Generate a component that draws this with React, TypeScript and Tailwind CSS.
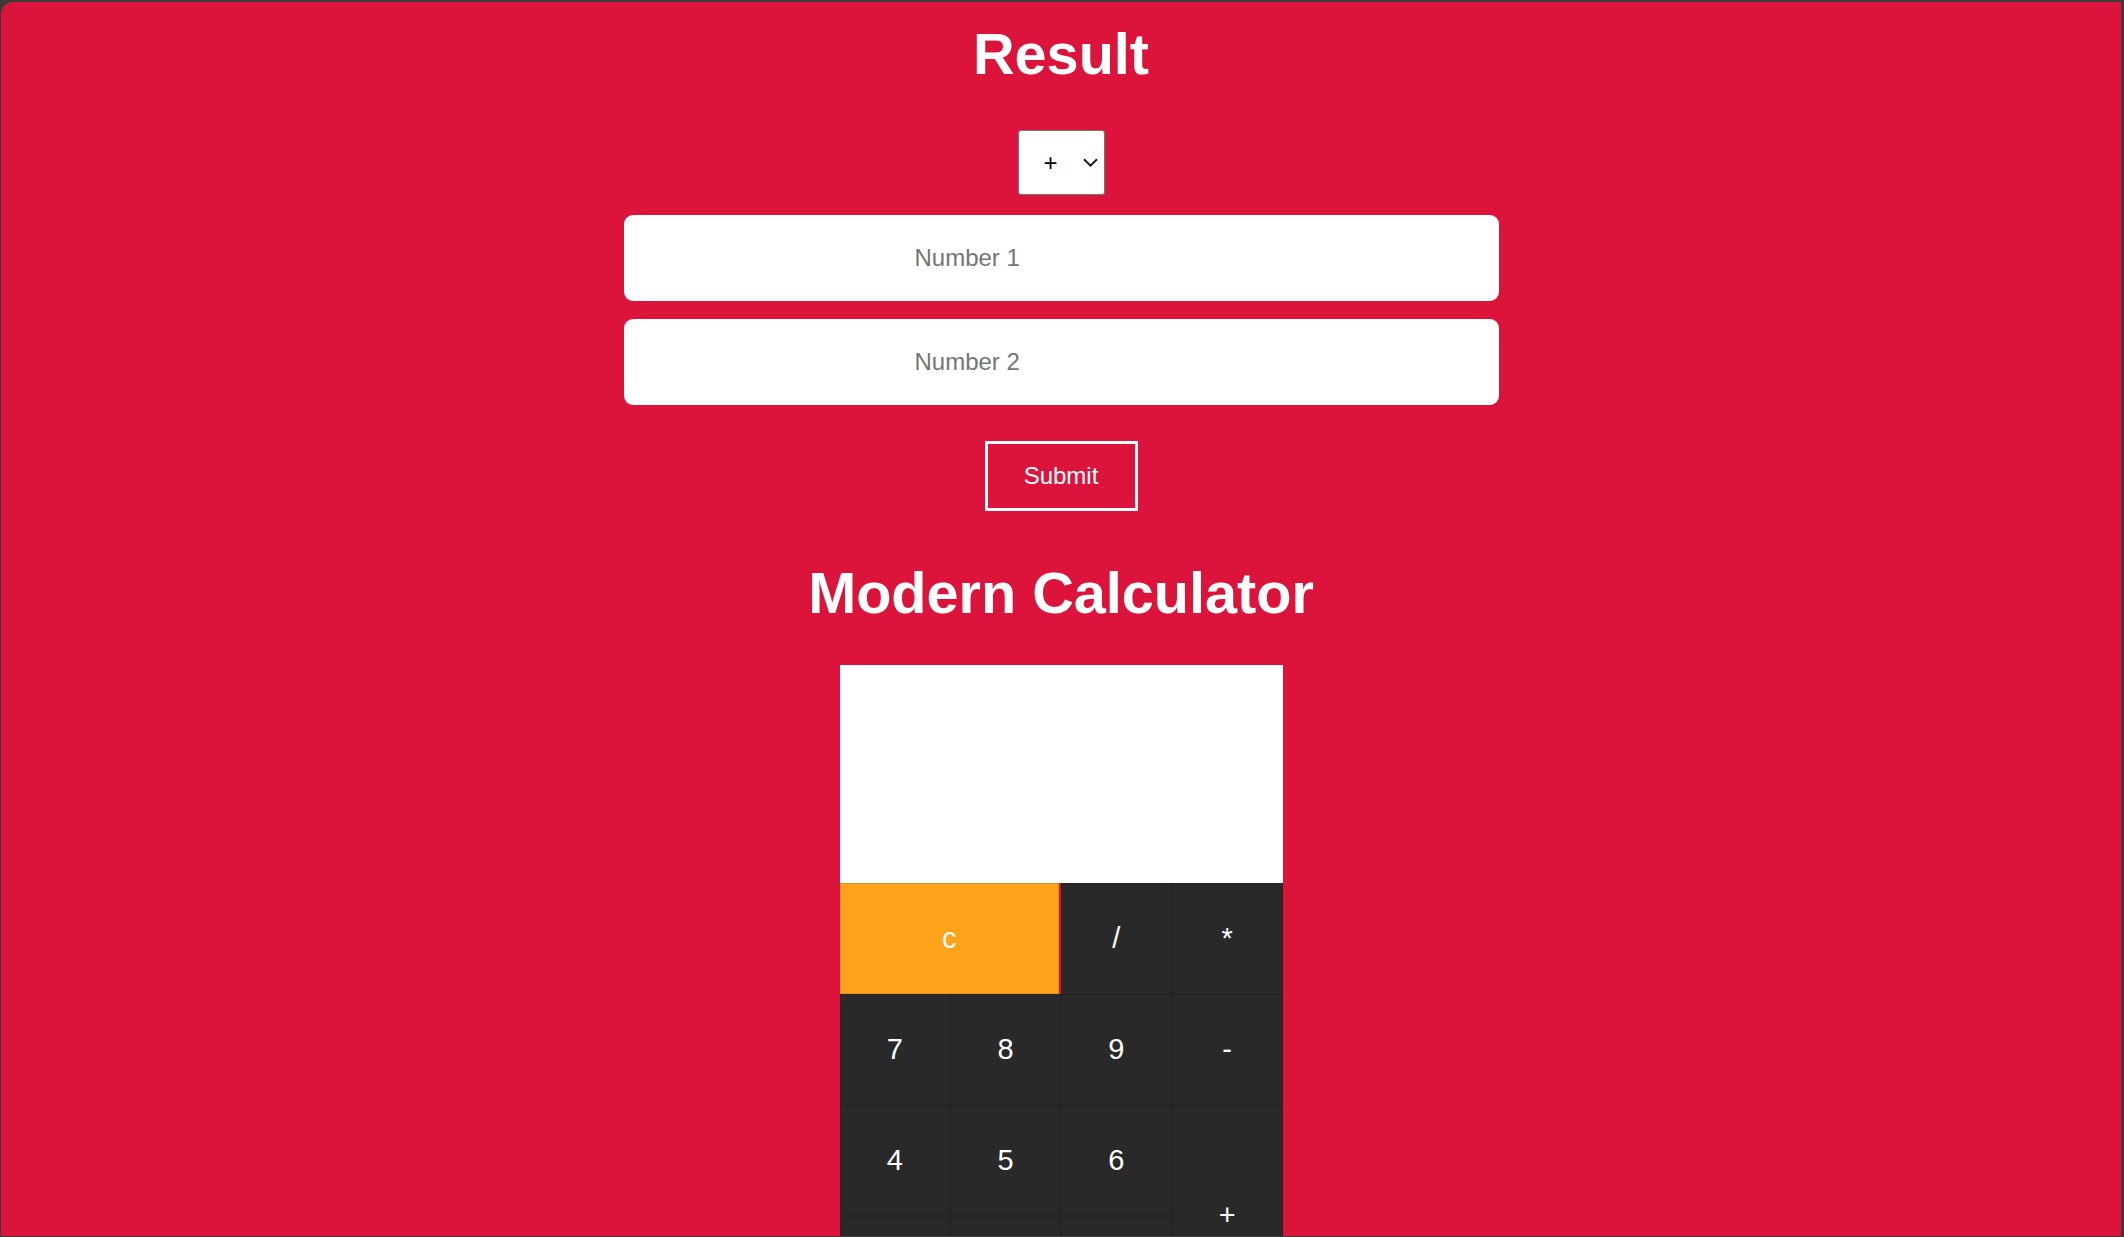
const font = { fontFamily: '"Liberation Sans", Arial, sans-serif' };

type Key = { label: string; className?: string; orange?: boolean };

const keys: Key[] = [
  { label: "c", className: "col-span-2 mr-[2px]", orange: true },
  { label: "/" },
  { label: "*" },
  { label: "7" },
  { label: "8" },
  { label: "9" },
  { label: "-" },
  { label: "4" },
  { label: "5" },
  { label: "6" },
  { label: "+", className: "row-span-2" },
  { label: "1" },
  { label: "2" },
  { label: "3" },
  { label: "0", className: "col-span-2" },
  { label: "." },
  { label: "=" },
];

const Chevron = () => (
  <svg width="15" height="9" viewBox="0 0 15 9" fill="none">
    <path d="M1 1.2 L7.5 7.6 L14 1.2" stroke="#1a1a1a" strokeWidth="2" />
  </svg>
);

export default function App() {
  return (
    <div
      className="flex h-screen w-full overflow-hidden bg-[#3b3b3b] pt-[2px] pr-[3px] pb-[1px] pl-[1px]"
      style={font}
    >
      <div className="flex flex-1 flex-col items-center overflow-hidden rounded-tl-[12px] bg-[#dc143c]">
        <h1 className="mt-[19px] shrink-0 text-[57.6px] leading-[66px] font-bold text-white">Result</h1>

        {/* operator picker */}
        <div className="mt-[43px] flex h-[65px] w-[87px] shrink-0 items-center rounded-[3px] border border-[#767676] bg-white pr-[6px] pl-[25px] text-[24px] text-black">
          <span className="mr-auto">+</span>
          <Chevron />
        </div>

        <input
          type="text"
          placeholder="Number 1"
          className="mt-[20px] h-[86px] w-[875px] shrink-0 rounded-[9px] bg-white pl-[291px] text-[24px] text-black outline-none placeholder:text-[#757575]"
        />
        <input
          type="text"
          placeholder="Number 2"
          className="mt-[18px] h-[86px] w-[875px] shrink-0 rounded-[9px] bg-white pl-[291px] text-[24px] text-black outline-none placeholder:text-[#757575]"
        />

        <button className="mt-[36px] h-[70px] w-[153px] shrink-0 border-[3px] border-white text-[24px] text-white">
          Submit
        </button>

        <h2 className="mt-[49px] shrink-0 text-[57.6px] leading-[66px] font-bold text-white">Modern Calculator</h2>

        <div className="mt-[39px] flex w-[443px] shrink-0 flex-col">
          <div className="h-[218px] shrink-0 bg-white" />
          <div className="grid shrink-0 grid-cols-4 auto-rows-[111px]">
            {keys.map((k) => (
              <div
                key={k.label}
                className={`flex items-center justify-center border border-black/10 text-[29px] text-white ${
                  k.orange ? "bg-[#ffa31a]" : "bg-[#292929]"
                } ${k.className ?? ""}`}
              >
                {k.label}
              </div>
            ))}
          </div>
        </div>
      </div>
    </div>
  );
}
